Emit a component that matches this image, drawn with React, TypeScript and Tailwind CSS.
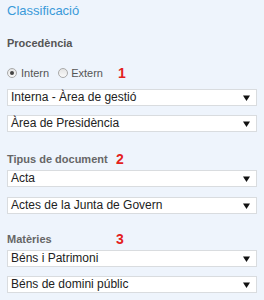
const Arrow = () => (
  <svg width="7" height="6" viewBox="0 0 7 6" className="shrink-0">
    <path d="M0 0.5 H7 L3.5 6 Z" fill="#111" />
  </svg>
);

const Select = ({ value, className = "" }: { value: string; className?: string }) => (
  <div
    className={`flex items-center justify-between w-[250px] h-[17px] bg-white border border-[#d9dcdf] pl-[3px] pr-[6px] text-[12px] leading-[15px] text-[#222] ${className}`}
  >
    <span className="whitespace-nowrap">{value}</span>
    <Arrow />
  </div>
);

const Radio = ({ checked }: { checked?: boolean }) => (
  <span className="flex items-center justify-center w-[10px] h-[10px] rounded-full border border-[#a9a9a9] bg-gradient-to-b from-[#e4e4e4] to-[#fafafa]">
    {checked && <span className="w-[4px] h-[4px] rounded-full bg-[#444]" />}
  </span>
);

const Label = ({ text, num, className = "" }: { text: string; num: string; className?: string }) => (
  <div className={`flex items-center h-[16px] ${className}`}>
    <span className="w-[109px] text-[11px] font-bold text-[#666]">{text}</span>
    <span className="text-[14px] font-bold text-[#e3211d] leading-[16px]">{num}</span>
  </div>
);

export default function App() {
  return (
    <div className="w-[264px] h-[300px] bg-[#eef4fc] px-[7px] pt-[3px] font-['Liberation_Sans',Arial,sans-serif]">
      <div className="text-[13px] leading-[16px] text-[#3a9ad9]">Classificació</div>

      <div className="mt-[16px] h-[16px] leading-[16px] text-[11px] font-bold text-[#555]">Procedència</div>

      <div className="mt-[14px] flex items-center h-[16px] text-[11px] text-[#555]">
        <Radio checked />
        <span className="ml-[4px]">Intern</span>
        <span className="ml-[9px]">
          <Radio />
        </span>
        <span className="ml-[3px]">Extern</span>
        <span className="ml-[15px] text-[14px] font-bold text-[#e3211d]">1</span>
      </div>

      <Select value="Interna - Àrea de gestió" className="mt-[8px]" />
      <Select value="Àrea de Presidència" className="mt-[9px]" />

      <Label text="Tipus de document" num="2" className="mt-[19px]" />
      <Select value="Acta" className="mt-[3px]" />
      <Select value="Actes de la Junta de Govern" className="mt-[10px]" />

      <Label text="Matèries" num="3" className="mt-[17px]" />
      <Select value="Béns i Patrimoni" className="mt-[3px]" />
      <Select value="Béns de domini públic" className="mt-[9px]" />
    </div>
  );
}
